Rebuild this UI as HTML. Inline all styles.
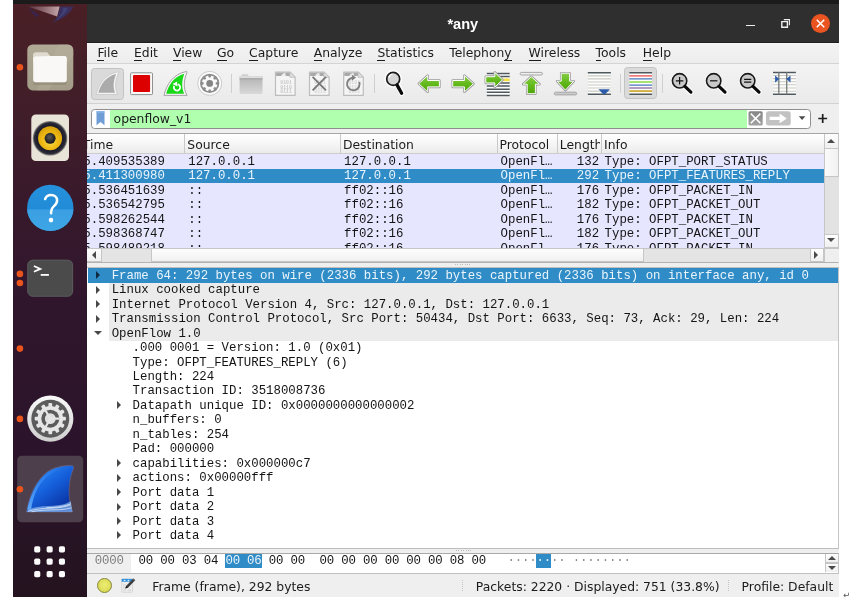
<!DOCTYPE html>
<html lang="en">
<head>
<meta charset="utf-8">
<title>*any</title>
<style>
html,body{margin:0;padding:0;background:#fff;}
body{width:865px;height:615px;overflow:hidden;position:relative;font-family:"DejaVu Sans","Liberation Sans",sans-serif;font-size:12.36px;color:#1b1b1b;}
div,span,svg{position:absolute;box-sizing:border-box;}
.mono{font-family:"Liberation Mono","DejaVu Sans Mono",monospace;font-size:12.375px;white-space:pre;line-height:14.45px;height:14.45px;color:#141414;}
.ui{white-space:pre;line-height:16px;height:16px;}
.sel{color:#eaf4fc;}
u{text-decoration:none;border-bottom:1.1px solid #1b1b1b;padding-bottom:0.2px;}
#dock{left:12.5px;top:4.2px;width:74.6px;height:593.1px;background:linear-gradient(180deg,#4a1f25 0%,#431f28 12%,#3a1a2b 30%,#30162d 50%,#2b142b 75%,#24131f 100%);}
.dot{width:6.6px;height:6.6px;border-radius:50%;background:#e8541c;left:16.1px;}
.tsep{width:1px;height:19.5px;top:73.6px;background:#cfcfcf;}
.pressed{background:#dadada;border:1px solid #c3c3c3;border-radius:3.5px;}
.hdr{top:134.3px;height:18.9px;line-height:23px;white-space:pre;color:#1b1b1b;}
.prow{left:87.1px;width:736.9px;height:14.45px;background:#e7e6ff;overflow:hidden;}
.prow.s{background:#308cc6;}
.prow span{top:0.5px;}
.drow{left:87.8px;width:750.4px;height:14.45px;}
.g{left:21.4px;right:0;top:0;height:14.45px;background:#ebebeb;}
.tri{width:0;height:0;border-style:solid;}
#root{left:0;top:0;width:865px;height:615px;will-change:transform;}
</style>
</head>
<body>
<div id="root">
<div id="topbar" style="left:12.5px;top:0;width:826.6px;height:4.3px;background:#1b1b1b"></div>
<div id="dock"></div>
<svg id="dockicons" style="left:12.5px;top:4.2px" width="74.6" height="592.3" viewBox="12.5 4.2 74.6 592.3">
<defs>
<linearGradient id="gFiles" x1="0" y1="0" x2="0" y2="1"><stop offset="0" stop-color="#b0a996"/><stop offset="1" stop-color="#a39c88"/></linearGradient>
<radialGradient id="gSpkY" cx=".5" cy=".62" r=".55"><stop offset="0" stop-color="#f8dc60"/><stop offset=".55" stop-color="#f0bc14"/><stop offset="1" stop-color="#dca60c"/></radialGradient>
<radialGradient id="gSpkD" cx=".45" cy=".4" r=".6"><stop offset="0" stop-color="#5a5a5a"/><stop offset="1" stop-color="#141414"/></radialGradient>
<radialGradient id="gSpkO" cx=".5" cy=".5" r=".5"><stop offset=".74" stop-color="#1c1c2c"/><stop offset=".9" stop-color="#2c2c38"/><stop offset="1" stop-color="#6a6864" stop-opacity=".55"/></radialGradient>
<linearGradient id="gHelpT" x1="0" y1="0" x2="0" y2="1"><stop offset="0" stop-color="#2591dc"/><stop offset="1" stop-color="#1f86d2"/></linearGradient>
<linearGradient id="gHelpB" x1="0" y1="0" x2="0" y2="1"><stop offset="0" stop-color="#3b9fe2"/><stop offset="1" stop-color="#3da6e6"/></linearGradient>
<linearGradient id="gSetR" x1="0" y1="0" x2="0" y2="1"><stop offset="0" stop-color="#fafafa"/><stop offset="1" stop-color="#cfcfcf"/></linearGradient>
<linearGradient id="gFin" x1=".15" y1=".1" x2=".8" y2=".95"><stop offset="0" stop-color="#2a86f4"/><stop offset=".45" stop-color="#1560dc"/><stop offset="1" stop-color="#0a2f9e"/></linearGradient>
<linearGradient id="gFinHi" x1="0" y1="1" x2="1" y2="0"><stop offset="0" stop-color="#6ab4ff" stop-opacity=".9"/><stop offset="1" stop-color="#2a86f4" stop-opacity="0"/></linearGradient>
<linearGradient id="gTb" x1="0" y1="0" x2="1" y2="0"><stop offset="0" stop-color="#5a3340"/><stop offset=".5" stop-color="#8c676e"/><stop offset="1" stop-color="#c2a6a8"/></linearGradient>
<clipPath id="cHelp"><circle cx="49.8" cy="208.1" r="23.2"/></clipPath>
</defs>
<!-- thunderbird remnant -->
<path d="M27.4 6.600L59.200 6.700L56.600 16.800Z" fill="url(#gTb)"/>
<path d="M27.200 6.800C30 11.500 33.500 15.500 37 18.600 36 16.500 37 15 39 15.800 34.500 13 30.500 9.800 27.200 6.800Z" fill="#33275e" opacity=".75"/>
<path d="M59.400 6.600L73 6.800C69.500 14.500 61 20.500 51.500 22.400 54.500 20.500 56 18.600 56.800 16.600 58 13 59 9 59.400 6.600Z" fill="#34377a" opacity=".65"/>
<path d="M62 8C63.500 11.500 60 16 55.500 19.500 61 17.500 66 13 67.500 8Z" fill="#465c9e" opacity=".4"/>
<!-- files -->
<rect x="26.8" y="44.6" width="46" height="46" rx="5.4" fill="url(#gFiles)"/>
<path d="M58 44.6h9.4a5.4 5.4 0 0 1 5.4 5.4v6L48 90.6H36z" fill="#b8b19e" opacity=".35"/>
<rect x="26.8" y="86.4" width="46" height="4.2" fill="#968f7c" opacity=".0"/>
<path d="M32.7 55.4a2.6 2.6 0 0 1 2.6-2.6h10.2c1.2 0 1.7.5 2.4 1.4l1.5 2h14.3a2.6 2.6 0 0 1 2.6 2.6V62H32.7z" fill="#dfdad0"/>
<rect x="32.7" y="56.2" width="33.6" height="26.2" rx="2.6" fill="#faf8f6" />
<path d="M32.7 56.6v-1.2a2.6 2.6 0 0 1 2.6-2.6h10.2c1.2 0 1.7.5 2.4 1.4l1.5 2z" fill="#dfdad0"/>
<path d="M32.7 80.4v2.2a2.6 2.6 0 0 0 2.6 2.6h28.4a2.6 2.6 0 0 0 2.6-2.6v-2.2a2.6 2.6 0 0 1-2.6 2.6H35.3a2.6 2.6 0 0 1-2.6-2.6z" fill="#8d8674" opacity=".6"/>
<!-- rhythmbox -->
<rect x="30.800" y="114.600" width="37.700" height="46.600" rx="4.600" fill="#e8e4d8"/>
<circle cx="49.6" cy="138.5" r="17.4" fill="url(#gSpkO)"/>
<circle cx="49.6" cy="138.5" r="12" fill="url(#gSpkY)"/>
<circle cx="49.6" cy="138.5" r="5.5" fill="url(#gSpkD)"/>
<!-- help -->
<circle cx="49.8" cy="208.1" r="23.2" fill="url(#gHelpT)"/>
<rect x="26" y="209.6" width="48" height="22" fill="url(#gHelpB)" clip-path="url(#cHelp)"/>
<path d="M44.6 199.2c1-2.6 3-4 5.8-4 3.6 0 6.2 2.2 6.2 5.4 0 2.6-1.4 4.2-3.4 6-1.8 1.600-2.600 3-2.600 5.400v1.400" fill="none" stroke="#fff" stroke-width="2.5" stroke-linecap="round"/>
<circle cx="50.5" cy="220.300" r="2.300" fill="#fff"/>
<!-- terminal -->
<rect x="26.800" y="259.900" width="45.800" height="37" rx="5.400" fill="#4b4b4b"/>
<rect x="27.300" y="260.400" width="44.800" height="36" rx="5" fill="none" stroke="#5c5c5c" stroke-width="1" opacity=".8"/>
<path d="M33.400 266.200l6.400 2.900-6.400 2.900" fill="none" stroke="#fff" stroke-width="1.800"/>
<rect x="40.200" y="274.200" width="8.200" height="1.800" fill="#fff"/>
<!-- settings -->
<circle cx="49.800" cy="418.900" r="23.100" fill="url(#gSetR)"/>
<circle cx="49.800" cy="418.900" r="19" fill="#5b5b5b"/>
<g fill="#e6e6e6">
<circle cx="49.800" cy="418.900" r="12.800"/>
<g><rect x="47.9" y="403.3" width="3.800" height="4.500" rx="1" transform="rotate(0.0 49.8 418.9)"/><rect x="47.9" y="403.3" width="3.800" height="4.500" rx="1" transform="rotate(30.0 49.8 418.9)"/><rect x="47.9" y="403.3" width="3.800" height="4.500" rx="1" transform="rotate(60.0 49.8 418.9)"/><rect x="47.9" y="403.3" width="3.800" height="4.500" rx="1" transform="rotate(90.0 49.8 418.9)"/><rect x="47.9" y="403.3" width="3.800" height="4.500" rx="1" transform="rotate(120.0 49.8 418.9)"/><rect x="47.9" y="403.3" width="3.800" height="4.500" rx="1" transform="rotate(150.0 49.8 418.9)"/><rect x="47.9" y="403.3" width="3.800" height="4.500" rx="1" transform="rotate(180.0 49.8 418.9)"/><rect x="47.9" y="403.3" width="3.800" height="4.500" rx="1" transform="rotate(210.0 49.8 418.9)"/><rect x="47.9" y="403.3" width="3.800" height="4.500" rx="1" transform="rotate(240.0 49.8 418.9)"/><rect x="47.9" y="403.3" width="3.800" height="4.500" rx="1" transform="rotate(270.0 49.8 418.9)"/><rect x="47.9" y="403.3" width="3.800" height="4.500" rx="1" transform="rotate(300.0 49.8 418.9)"/><rect x="47.9" y="403.3" width="3.800" height="4.500" rx="1" transform="rotate(330.0 49.8 418.9)"/></g>
</g>
<circle cx="49.800" cy="418.900" r="9" fill="#5b5b5b"/>
<circle cx="49.800" cy="418.900" r="5.400" fill="#e0e0e0"/>
<path d="M49.800 418.900L59 418.900M49.800 418.900L45.200 410.900M49.800 418.900L45.200 426.900" stroke="#e6e6e6" stroke-width="2.200"/>
<!-- wireshark highlighted -->
<rect x="16.700" y="456" width="66" height="66.500" rx="4.500" fill="#4d3f4b"/>
<path d="M25.900 512.300C28.500 497 35 481 47 472 54 467.300 63 465.700 70.500 465.800c2.300 0 3.300 1.200 2.500 3C69 478 66 495 72 512.300z" fill="url(#gFin)" stroke="#7a6272" stroke-width=".6"/>
<path d="M26.800 510C29.800 496 36 481.500 47.600 473 54 468.600 62 466.800 70 466.800 56 469 44 476 37.500 488 33.500 495.500 31.500 503 30.600 510z" fill="url(#gFinHi)"/>
<path d="M25.900 512.300c2-2.800 6-4.600 11-5.200 8-.9 15-.6 22-1.800 5-.9 9-2.400 11.400-4.200l1.700 11.200z" fill="#7eaeea" opacity=".75"/>
<path d="M27.500 511.500c7-2.200 15-3 24-3.200 7-.2 13-1.200 18.500-3M31 512c8-1.400 16-2 23-2 7 0 12-.6 17-2M46 508c8-.4 17-1 24.500-4" fill="none" stroke="#fff" stroke-width=".7" opacity=".85"/>
<!-- app grid -->
<g fill="#fbfbfb">
<rect x="33.7" y="546.5" width="6.100" height="6.100" rx="1.600"/><rect x="46.1" y="546.5" width="6.100" height="6.100" rx="1.600"/><rect x="58.4" y="546.5" width="6.100" height="6.100" rx="1.600"/>
<rect x="33.7" y="558.8" width="6.100" height="6.100" rx="1.600"/><rect x="46.1" y="558.8" width="6.100" height="6.100" rx="1.600"/><rect x="58.4" y="558.8" width="6.100" height="6.100" rx="1.600"/>
<rect x="33.7" y="571.3" width="6.100" height="6.100" rx="1.600"/><rect x="46.1" y="571.3" width="6.100" height="6.100" rx="1.600"/><rect x="58.4" y="571.3" width="6.100" height="6.100" rx="1.600"/>
</g>
<!-- running dots -->
<g fill="#e8541c">
<circle cx="19.400" cy="67.500" r="3.300"/><circle cx="19.400" cy="274.100" r="3.300"/><circle cx="19.400" cy="283.200" r="3.300"/><circle cx="19.400" cy="348.800" r="3.300"/><circle cx="19.400" cy="419.100" r="3.300"/><circle cx="19.400" cy="489.500" r="3.300"/>
</g>
</svg>

<div id="titlebar" style="left:87.1px;top:4.2px;width:752px;height:38.4px;background:#302f2f;border-bottom:1.4px solid #1f1f1f"></div>
<div class="ui" style="left:412.8px;top:14.1px;width:100px;text-align:center;color:#fff;font:bold 14.6px/20px 'Liberation Sans','DejaVu Sans',sans-serif;height:20px">*any</div>
<div style="left:746px;top:25px;width:9px;height:1.400px;background:#ececec"></div>
<svg style="left:779px;top:17px" width="13" height="13" viewBox="0 0 13 13"><path d="M2.800 4.600h5.600v5.600H2.800z" fill="none" stroke="#f0f0f0" stroke-width="1.400"/><path d="M4.800 2.600h5.600v5.600" fill="none" stroke="#f0f0f0" stroke-width="1.100"/><rect x="4.6" y="6" width="2" height="2.6" fill="#f2f2f2" opacity=".0"/></svg>
<div style="left:811.2px;top:13.4px;width:19px;height:19px;border-radius:50%;background:#e95420;margin-top:.5px"></div>
<svg style="left:811.2px;top:13.9px" width="19" height="19" viewBox="0 0 19 19"><path d="M5.800 5.800l7.400 7.400M13.200 5.800l-7.400 7.400" stroke="#fff" stroke-width="1.600" fill="none"/></svg>
<div id="win" style="left:87.1px;top:43px;width:752px;height:554.3px;background:#efefef"></div>
<div id="menubar" style="left:87.1px;top:43px;width:752px;height:20.600px;background:linear-gradient(#f3f3f3,#ededed);border-bottom:1px solid #d4d4d4;border-top:1px solid #f8f8f8"></div>
<div class="ui" style="left:97.4px;top:44.6px"><u>F</u>ile</div>
<div class="ui" style="left:134.0px;top:44.6px"><u>E</u>dit</div>
<div class="ui" style="left:173.0px;top:44.6px"><u>V</u>iew</div>
<div class="ui" style="left:217.0px;top:44.6px"><u>G</u>o</div>
<div class="ui" style="left:249.1px;top:44.6px"><u>C</u>apture</div>
<div class="ui" style="left:313.7px;top:44.6px"><u>A</u>nalyze</div>
<div class="ui" style="left:377.4px;top:44.6px"><u>S</u>tatistics</div>
<div class="ui" style="left:449.2px;top:44.6px">Telephon<u>y</u></div>
<div class="ui" style="left:528.6px;top:44.6px"><u>W</u>ireless</div>
<div class="ui" style="left:595.6px;top:44.6px"><u>T</u>ools</div>
<div class="ui" style="left:642.8px;top:44.6px"><u>H</u>elp</div>
<div id="toolbar" style="left:87.1px;top:63.6px;width:752px;height:40.4px;background:linear-gradient(#f3f3f3,#eaeaea);border-bottom:1px solid #d2d2d2"></div>
<div class="pressed" style="left:91.3px;top:67.5px;width:32.7px;height:32.2px"></div>
<div class="pressed" style="left:624.3px;top:67.4px;width:32.7px;height:32px"></div>
<div class="tsep" style="left:230.6px"></div><div class="tsep" style="left:374.3px"></div><div class="tsep" style="left:620.2px"></div><div class="tsep" style="left:662px"></div>
<svg id="toolicons" style="left:87.1px;top:62.7px" width="752" height="41" viewBox="87.1 62.6 752 41">
<defs>
<linearGradient id="gGrn" x1="0" y1="0" x2="0" y2="1"><stop offset="0" stop-color="#86ce46"/><stop offset=".5" stop-color="#64ba1c"/><stop offset="1" stop-color="#4ea40a"/></linearGradient>
<linearGradient id="gFold" x1="0" y1="0" x2="0" y2="1"><stop offset="0" stop-color="#b2b2b2"/><stop offset="1" stop-color="#d9d9d9"/></linearGradient>
<g id="filebase">
<path d="M.6.6h14.400l5.200 5.200v18.200H.6z" fill="#f5f5f5" stroke="#bdbdbd" stroke-width="1.200" stroke-linejoin="round"/>
<path d="M1.200 1.200h13.600l3.400 3.400H1.200z" fill="#a9a9a9"/>
<path d="M1.200 3.600h5.600c1-1.600 1.800-2.400 3.400-2.400h-9z" fill="#bcbcbc" opacity=".0"/>
<path d="M6.200 4.700c.8-1.900 2.200-3 4.200-3.300l.5 3.300z" fill="#ececec"/>
<path d="M15 .6v5.200h5.200z" fill="#e2e2e2" stroke="#bdbdbd" stroke-width=".9" stroke-linejoin="round"/>
</g>
<g id="mag">
<path d="M4.600 5.200L11.200 11.400" stroke="#fff" stroke-width="5.400" stroke-linecap="round" opacity=".9"/>
<circle cx="0" cy="0" r="8.600" fill="#fff" opacity=".9"/>
<circle cx="0" cy="0" r="7.200" fill="#c9c9c9" stroke="#1a1a1a" stroke-width="1.600"/>
<path d="M5.300 5.600L11.300 11.300" stroke="#0a0a0a" stroke-width="3.200" stroke-linecap="round"/>
</g>
</defs>
<!-- start capture (disabled) -->
<path d="M96.200 94.100C98.600 83.500 105.500 73.500 118.200 71.400c.5-.1.800.3.600.8C115.600 79.500 114.400 87 117.800 94.100z" fill="#f3f3f3" stroke="#c6c6c6" stroke-width=".8"/>
<path d="M98.400 92.400C100.600 84 106.400 75.600 116.200 73.500 113.600 80 112.800 86.500 115.200 92.400z" fill="#ababab"/>
<!-- stop -->
<rect x="130.700" y="72.400" width="21.900" height="21.800" rx=".8" fill="#fbfbfb" stroke="#8c9190" stroke-width="1"/>
<rect x="133.100" y="74.600" width="17.100" height="16.900" rx="1" fill="#dc0000"/>
<!-- restart -->
<path d="M164.100 95C166.600 84 173.500 73.400 186.500 71.100c.5-.1.800.3.600.8C184 79.500 183 87.500 187.100 95z" fill="#f8f4f8" stroke="#9c9a9c" stroke-width=".9"/>
<path d="M166.300 93.300C168.600 84.600 174.500 75.800 184.400 73.400 182 80 181.300 87 184.300 93.300z" fill="#18d818"/>
<path d="M174.300 85.400a3.200 3.200 0 1 0 3.600-1.500" fill="none" stroke="#fff" stroke-width="1.700"/>
<path d="M172.600 83.600l4.600-2.400.4 4.800z" fill="#fff"/>
<!-- options gear -->
<circle cx="209.800" cy="83" r="12" fill="#fdfdfd" stroke="#c4c4c4" stroke-width=".9"/>
<circle cx="209.800" cy="83" r="9.600" fill="#8d8d8d"/>
<g fill="#fafafa"><circle cx="209.800" cy="83" r="6"/>
<g><rect x="208.3" y="75.2" width="3" height="3" rx=".6" transform="rotate(22.5 209.8 83)"/><rect x="208.3" y="75.2" width="3" height="3" rx=".6" transform="rotate(67.5 209.8 83)"/><rect x="208.3" y="75.2" width="3" height="3" rx=".6" transform="rotate(112.5 209.8 83)"/><rect x="208.3" y="75.2" width="3" height="3" rx=".6" transform="rotate(157.5 209.8 83)"/><rect x="208.3" y="75.2" width="3" height="3" rx=".6" transform="rotate(202.5 209.8 83)"/><rect x="208.3" y="75.2" width="3" height="3" rx=".6" transform="rotate(247.5 209.8 83)"/><rect x="208.3" y="75.2" width="3" height="3" rx=".6" transform="rotate(292.5 209.8 83)"/><rect x="208.3" y="75.2" width="3" height="3" rx=".6" transform="rotate(337.5 209.8 83)"/></g></g>
<circle cx="209.800" cy="83" r="3.400" fill="#858585"/>
<!-- folder -->
<path d="M241.600 76v-1.200c0-.5.400-.9.900-.9h5c.5 0 .9.400.9.900V76z" fill="#d0d0d0"/>
<rect x="239.700" y="75.700" width="22.900" height="18" rx="1" fill="url(#gFold)"/>
<rect x="239.700" y="75.700" width="22.900" height="2.200" fill="#dedede"/>
<rect x="239.700" y="77.900" width="22.900" height="1.100" fill="#a4a4a4"/>
<!-- file icons -->
<use href="#filebase" x="275" y="71"/>
<g fill="#c8c8c8" font-family="Liberation Mono,monospace" font-size="4.800" font-weight="bold"><text x="280.400" y="83.500">0101</text><text x="280.400" y="88.300">0110</text><text x="280.400" y="93.100">0111</text></g>
<use href="#filebase" x="309" y="71"/>
<g fill="#d4d4d4" font-family="Liberation Mono,monospace" font-size="4.800" font-weight="bold"><text x="314.400" y="83.500">0101</text><text x="314.400" y="88.300">0110</text><text x="314.400" y="93.100">0111</text></g>
<path d="M312.700 76.500L326.100 89.900M326.100 76.500L312.700 89.900" stroke="#787878" stroke-width="1.900"/>
<use href="#filebase" x="343.200" y="71"/>
<g fill="#d4d4d4" font-family="Liberation Mono,monospace" font-size="4.800" font-weight="bold"><text x="348.600" y="83.500">0101</text><text x="348.600" y="88.300">0110</text><text x="348.600" y="93.100">0111</text></g>
<path d="M352.800 77.300a6.300 6.300 0 1 0 6.600 4.200" fill="none" stroke="#808080" stroke-width="1.900"/>
<path d="M352 74.300l4.200 2.900-4.200 3.100z" fill="#808080"/>
<!-- find -->
<g transform="translate(393.300 78.500)">
<path d="M4.600 5.200L8.600 14.600" stroke="#fff" stroke-width="5.400" stroke-linecap="round" opacity=".9"/>
<circle cx="0" cy="0" r="8.800" fill="#fff" opacity=".9"/>
<circle cx="0" cy="0" r="6.500" fill="#d6d6d6" stroke="#1a1a1a" stroke-width="1.700"/>
<path d="M-4.400 -1.400a4.600 4.600 0 0 1 3.800-3.500" fill="none" stroke="#fff" stroke-width="1.200"/>
<path d="M3.800 6L8.400 14.400" stroke="#0a0a0a" stroke-width="3.300" stroke-linecap="round"/>
</g>
<!-- back -->
<path d="M418.900 83.300L427.800 75.200V80.100H439.500V86.500H427.800V91.400Z" fill="none" stroke="#9c9a9c" stroke-width="2.500" stroke-linejoin="round"/><path d="M418.900 83.300L427.800 75.200V80.100H439.500V86.500H427.800V91.400Z" fill="url(#gGrn)" stroke="#fcfcfc" stroke-width="1" stroke-linejoin="round"/>
<!-- forward -->
<path d="M473.600 83.300L464.500 75.200V80.100H452.800V86.500H464.500V91.400Z" fill="none" stroke="#9c9a9c" stroke-width="2.500" stroke-linejoin="round"/><path d="M473.600 83.300L464.500 75.200V80.100H452.800V86.500H464.500V91.400Z" fill="url(#gGrn)" stroke="#fcfcfc" stroke-width="1" stroke-linejoin="round"/>
<!-- goto -->
<rect x="486.900" y="72" width="22.900" height="24" fill="#fdfdfd"/>
<g stroke="#4f595d" stroke-width="1.500"><path d="M486.900 73h22.900M486.900 76.200h22.900M486.900 82.500h22.900M486.900 85.700h22.900M486.900 88.800h22.900M486.900 91.900h22.900M486.900 95.100h22.900"/></g>
<rect x="500" y="78.100" width="9.800" height="2.700" fill="#f6e046"/>
<path d="M502.600 79.400L494.900 72V76.300H485.900V82.500H494.900V86.800Z" fill="none" stroke="#9c9a9c" stroke-width="2.500" stroke-linejoin="round"/><path d="M502.600 79.400L494.900 72V76.300H485.900V82.500H494.900V86.800Z" fill="url(#gGrn)" stroke="#fcfcfc" stroke-width="1" stroke-linejoin="round"/>
<!-- first -->
<rect x="520.200" y="72" width="22.400" height="2.600" rx="1.300" fill="#eeeeee" stroke="#9e9e9e" stroke-width=".9"/>
<path d="M531.400 76.200L539.600 83.800H535.500V93.300H527.300V83.800H523.200Z" fill="none" stroke="#9c9a9c" stroke-width="2.500" stroke-linejoin="round"/><path d="M531.400 76.200L539.600 83.800H535.500V93.300H527.300V83.800H523.200Z" fill="url(#gGrn)" stroke="#fcfcfc" stroke-width="1" stroke-linejoin="round"/>
<!-- last -->
<rect x="554.400" y="91.800" width="22.400" height="2.700" rx="1.350" fill="#cccccc" stroke="#9e9e9e" stroke-width=".9"/>
<path d="M565.500 89.700L557.200 80.800H561.300V72.800H569.700V80.800H573.800Z" fill="none" stroke="#9c9a9c" stroke-width="2.500" stroke-linejoin="round"/><path d="M565.500 89.700L557.200 80.800H561.300V72.800H569.700V80.800H573.800Z" fill="url(#gGrn)" stroke="#fcfcfc" stroke-width="1" stroke-linejoin="round"/>
<!-- autoscroll -->
<rect x="587.900" y="71.500" width="23.100" height="23.200" fill="#fdfdfd"/>
<g stroke="#c9c9c1" stroke-width="1.100"><path d="M587.900 75.500h23.100M587.900 78.500h23.100M587.900 81.600h23.100M587.900 84.600h23.100M587.900 87.600h23.100M587.900 90.700h23.100"/></g>
<g stroke="#4f595d" stroke-width="1.500"><path d="M587.900 72.250h23.100M587.900 93.900h23.100"/></g>
<path d="M598.600 88.800h11.400l-4 4.400c-.9 1-2.500 1-3.400 0z" fill="#2c5caa"/>
<!-- colorize -->
<rect x="629.400" y="71.500" width="22.800" height="23.200" fill="#fdfdfd"/>
<g stroke-width="1.250"><path d="M629.400 72.250h22.800M629.400 93.900h22.800" stroke="#4f595d" stroke-width="1.500"/><path d="M629.400 75.500h22.800" stroke="#ee4646"/><path d="M629.400 78.500h22.800M629.400 84.600h22.800" stroke="#4676bc"/><path d="M629.400 81.600h22.800" stroke="#76d41e"/><path d="M629.400 87.600h22.800" stroke="#86629a"/><path d="M629.400 90.700h22.800" stroke="#d2ae3e" stroke-width="1.900"/></g>
<!-- zoom in/out/reset -->
<g transform="translate(679.700 80.400)"><use href="#mag"/><path d="M-3.700 0h7.400M0 -3.700v7.400" stroke="#111" stroke-width="1.200"/></g>
<g transform="translate(713.800 80.400)"><use href="#mag"/><path d="M-3.700 0h7.400" stroke="#111" stroke-width="1.200"/></g>
<g transform="translate(747.800 80.400)"><use href="#mag"/><path d="M-3.600 -1.400h7.200M-3.600 1.400h7.200" stroke="#111" stroke-width="1.300"/></g>
<!-- resize columns -->
<rect x="773.100" y="71.500" width="22.900" height="23" fill="#fdfdfd"/>
<g stroke="#c9c9c1" stroke-width="1.100"><path d="M773.100 75.100h22.900M773.100 78.200h22.900M773.100 81.300h22.900M773.100 84.400h22.900M773.100 87.600h22.900M773.100 90.800h22.900"/></g>
<g stroke="#4f595d" stroke-width="1.500"><path d="M773.100 72.200h22.900M773.100 93.800h22.900"/></g>
<path d="M778.900 72.200v21.600M786.800 72.200v21.600" stroke="#7c8482" stroke-width="1.400"/>
<path d="M775.200 75.200v6.800l4.200-3.400zM790.600 75.200v6.800l-4.200-3.400z" fill="#2c5caa"/>
</svg>

<div id="filter" style="left:91.3px;top:109.2px;width:720px;height:19.6px;background:#fff;border:1px solid #8f8f8f;border-radius:3.5px;overflow:hidden"><div style="left:18px;top:0;width:637px;height:18px;background:#afffaf"></div></div>
<svg style="left:95.6px;top:111.2px" width="10" height="15" viewBox="0 0 10 15"><path d="M0.5 0.3h8v13.9l-4-3.2-4 3.2z" fill="#6f9ed6"/><path d="M0.5 0.3h8v1.6H0.5z" fill="#8ab2e2"/></svg>
<div class="ui" style="left:113.6px;top:111.2px">openflow_v1</div>
<svg id="filterbtns" style="left:745px;top:108px" width="90" height="22" viewBox="745 108 90 22">
<defs><linearGradient id="gX" x1="0" y1="0" x2="0" y2="1"><stop offset="0" stop-color="#858585"/><stop offset="1" stop-color="#a3a3a3"/></linearGradient></defs>
<rect x="748.500" y="111.300" width="14.200" height="14.200" rx="1.500" fill="url(#gX)"/>
<path d="M750.800 113.600l9.600 9.600M760.400 113.600l-9.600 9.600" stroke="#fff" stroke-width="1.500"/>
<rect x="766" y="111.300" width="24.700" height="14.200" rx="2.500" fill="#c2c2c2"/>
<path d="M769.600 116.800h10v-3.200l7.200 4.800-7.200 4.800v-3.200h-10z" fill="#fff"/>
<path d="M798.800 116.300h6.600l-3.300 3.800z" fill="#4c4c4c"/>
<path d="M818.300 118.500h8.800M822.700 114.100v8.800" stroke="#1e1e1e" stroke-width="1.700"/>
</svg>

<div id="plist" style="left:87.1px;top:132.9px;width:752px;height:130.2px;background:#fff;border-top:1.400px solid #a6a6a6;border-bottom:1.100px solid #b2b2b2;border-right:1px solid #c4c4c4"></div>
<div style="left:87.1px;top:134.3px;width:737px;height:19.5px;background:linear-gradient(#ffffff,#f6f6f6 50%,#ebebeb);border-bottom:1px solid #cdcdcd"></div>
<div id="phead" style="left:87.1px;top:134.3px;width:736.9px;height:19px;overflow:hidden"><div class="hdr" style="top:0;left:-4.3px;width:100.8px;overflow:hidden">Time</div><div class="hdr" style="top:0;left:100.2px;width:151.7px;overflow:hidden">Source</div><div class="hdr" style="top:0;left:255.9px;width:152.0px;overflow:hidden">Destination</div><div class="hdr" style="top:0;left:412.4px;width:55.5px;overflow:hidden">Protocol</div><div class="hdr" style="top:0;left:472.7px;width:39.9px;overflow:hidden">Length</div><div class="hdr" style="top:0;left:517.0px;width:219.9px;overflow:hidden">Info</div><div style="top:0;left:97.4px;width:1px;height:19px;background:#c9c9c9"></div><div style="top:0;left:253.1px;width:1px;height:19px;background:#c9c9c9"></div><div style="top:0;left:409.9px;width:1px;height:19px;background:#c9c9c9"></div><div style="top:0;left:469.5px;width:1px;height:19px;background:#c9c9c9"></div><div style="top:0;left:513.6px;width:1px;height:19px;background:#c9c9c9"></div></div>
<div id="prows" style="left:87.1px;top:154.4px;width:736.9px;height:93.2px;overflow:hidden;background:#e7e6ff">
<div class="prow" style="left:0;top:0.00px"><span class="mono" style="left:-3.8px">5.409535389</span><span class="mono" style="left:101.2px">127.0.0.1</span><span class="mono" style="left:257.0px">127.0.0.1</span><span class="mono" style="left:413.5px">OpenFl…</span><span class="mono" style="left:470.2px;width:41.8px;text-align:right">132</span><span class="mono" style="left:517.5px">Type: OFPT_PORT_STATUS</span></div>
<div class="prow s" style="left:0;top:14.45px"><span class="mono sel" style="left:-3.8px">5.411300980</span><span class="mono sel" style="left:101.2px">127.0.0.1</span><span class="mono sel" style="left:257.0px">127.0.0.1</span><span class="mono sel" style="left:413.5px">OpenFl…</span><span class="mono sel" style="left:470.2px;width:41.8px;text-align:right">292</span><span class="mono sel" style="left:517.5px">Type: OFPT_FEATURES_REPLY</span></div>
<div class="prow" style="left:0;top:28.90px"><span class="mono" style="left:-3.8px">5.536451639</span><span class="mono" style="left:101.2px">::</span><span class="mono" style="left:257.0px">ff02::16</span><span class="mono" style="left:413.5px">OpenFl…</span><span class="mono" style="left:470.2px;width:41.8px;text-align:right">176</span><span class="mono" style="left:517.5px">Type: OFPT_PACKET_IN</span></div>
<div class="prow" style="left:0;top:43.35px"><span class="mono" style="left:-3.8px">5.536542795</span><span class="mono" style="left:101.2px">::</span><span class="mono" style="left:257.0px">ff02::16</span><span class="mono" style="left:413.5px">OpenFl…</span><span class="mono" style="left:470.2px;width:41.8px;text-align:right">182</span><span class="mono" style="left:517.5px">Type: OFPT_PACKET_OUT</span></div>
<div class="prow" style="left:0;top:57.80px"><span class="mono" style="left:-3.8px">5.598262544</span><span class="mono" style="left:101.2px">::</span><span class="mono" style="left:257.0px">ff02::16</span><span class="mono" style="left:413.5px">OpenFl…</span><span class="mono" style="left:470.2px;width:41.8px;text-align:right">176</span><span class="mono" style="left:517.5px">Type: OFPT_PACKET_IN</span></div>
<div class="prow" style="left:0;top:72.25px"><span class="mono" style="left:-3.8px">5.598368747</span><span class="mono" style="left:101.2px">::</span><span class="mono" style="left:257.0px">ff02::16</span><span class="mono" style="left:413.5px">OpenFl…</span><span class="mono" style="left:470.2px;width:41.8px;text-align:right">182</span><span class="mono" style="left:517.5px">Type: OFPT_PACKET_OUT</span></div>
<div class="prow" style="left:0;top:86.70px"><span class="mono" style="left:-3.8px">5.598489218</span><span class="mono" style="left:101.2px">::</span><span class="mono" style="left:257.0px">ff02::16</span><span class="mono" style="left:413.5px">OpenFl…</span><span class="mono" style="left:470.2px;width:41.8px;text-align:right">176</span><span class="mono" style="left:517.5px">Type: OFPT_PACKET_IN</span></div>
</div>
<div style="left:824px;top:134.3px;width:14.6px;height:113.3px;background:#e2e2e2;border-left:1px solid #c6c6c6"></div>
<div style="left:824px;top:134.3px;width:14.6px;height:14.8px;background:linear-gradient(#fdfdfd,#f0f0f0);border:1px solid #c6c6c6;border-top:none"></div>
<div class="tri" style="left:827.2px;top:139px;border-width:0 4.1px 4.4px 4.1px;border-color:transparent transparent #4a4a4a transparent"></div>
<div style="left:824px;top:149.1px;width:14.6px;height:28.4px;background:linear-gradient(90deg,#fbfbfb,#f1f1f1);border:1px solid #c6c6c6;border-top:none"></div>
<div style="left:824px;top:233.8px;width:14.6px;height:13.8px;background:linear-gradient(#fdfdfd,#f0f0f0);border:1px solid #c6c6c6"></div>
<div class="tri" style="left:827.2px;top:238.4px;border-width:4.4px 4.1px 0 4.1px;border-color:#4a4a4a transparent transparent transparent"></div>
<div style="left:87.1px;top:247.6px;width:736.9px;height:14.5px;background:#e4e4e4;border-top:1px solid #c6c6c6"></div>
<div style="left:87.1px;top:247.6px;width:15px;height:14.5px;background:linear-gradient(#fdfdfd,#f0f0f0);border:1px solid #c6c6c6;border-left:none"></div>
<div class="tri" style="left:92px;top:251.2px;border-width:4.1px 4.6px 4.1px 0;border-color:transparent #4a4a4a transparent transparent"></div>
<div style="left:151.3px;top:247.6px;width:492.4px;height:14.5px;background:linear-gradient(#fdfdfd,#f1f1f1);border:1px solid #c6c6c6"></div>
<div style="left:809.6px;top:247.6px;width:14.4px;height:14.5px;background:linear-gradient(#fdfdfd,#f0f0f0);border:1px solid #c6c6c6"></div>
<div class="tri" style="left:814.4px;top:251.2px;border-width:4.1px 0 4.1px 4.6px;border-color:transparent transparent transparent #4a4a4a"></div>
<div style="left:824px;top:247.6px;width:14.6px;height:14.5px;background:#efefef;border-left:1px solid #c6c6c6;border-top:1px solid #c6c6c6"></div>
<div style="left:455px;top:264.4px;width:16px;height:1px;background:repeating-linear-gradient(90deg,#b9b9b9 0 1px,transparent 1px 2.4px)"></div>
<div id="details" style="left:87.1px;top:267.4px;width:752px;height:281.2px;background:#fff;border-top:1px solid #c2beba;border-bottom:1px solid #bdbdbd;border-right:1px solid #c4c4c4"></div>
<div class="drow" style="top:268.30px;background:#308cc6;"><div class="tri" style="left:8.6px;top:3.1px;border-width:4.3px 0 4.3px 4.3px;border-color:transparent transparent transparent #0e2a40"></div><span class="mono sel" style="left:23.9px;top:0.6px">Frame 64: 292 bytes on wire (2336 bits), 292 bytes captured (2336 bits) on interface any, id 0</span></div>
<div class="drow" style="top:282.75px;"><div class="g"></div><div class="tri" style="left:8.6px;top:3.1px;border-width:4.3px 0 4.3px 4.3px;border-color:transparent transparent transparent #484848"></div><span class="mono" style="left:23.9px;top:0.6px">Linux cooked capture</span></div>
<div class="drow" style="top:297.20px;"><div class="g"></div><div class="tri" style="left:8.6px;top:3.1px;border-width:4.3px 0 4.3px 4.3px;border-color:transparent transparent transparent #484848"></div><span class="mono" style="left:23.9px;top:0.6px">Internet Protocol Version 4, Src: 127.0.0.1, Dst: 127.0.0.1</span></div>
<div class="drow" style="top:311.65px;"><div class="g"></div><div class="tri" style="left:8.6px;top:3.1px;border-width:4.3px 0 4.3px 4.3px;border-color:transparent transparent transparent #484848"></div><span class="mono" style="left:23.9px;top:0.6px">Transmission Control Protocol, Src Port: 50434, Dst Port: 6633, Seq: 73, Ack: 29, Len: 224</span></div>
<div class="drow" style="top:326.10px;"><div class="g"></div><div class="tri" style="left:6.5px;top:5.2px;border-width:4.6px 4.2px 0 4.2px;border-color:#484848 transparent transparent transparent"></div><span class="mono" style="left:23.9px;top:0.6px">OpenFlow 1.0</span></div>
<div class="drow" style="top:340.55px;"><span class="mono" style="left:44.8px;top:0.6px">.000 0001 = Version: 1.0 (0x01)</span></div>
<div class="drow" style="top:355.00px;"><span class="mono" style="left:44.8px;top:0.6px">Type: OFPT_FEATURES_REPLY (6)</span></div>
<div class="drow" style="top:369.45px;"><span class="mono" style="left:44.8px;top:0.6px">Length: 224</span></div>
<div class="drow" style="top:383.90px;"><span class="mono" style="left:44.8px;top:0.6px">Transaction ID: 3518008736</span></div>
<div class="drow" style="top:398.35px;"><div class="tri" style="left:28.8px;top:3.1px;border-width:4.3px 0 4.3px 4.3px;border-color:transparent transparent transparent #484848"></div><span class="mono" style="left:44.8px;top:0.6px">Datapath unique ID: 0x0000000000000002</span></div>
<div class="drow" style="top:412.80px;"><span class="mono" style="left:44.8px;top:0.6px">n_buffers: 0</span></div>
<div class="drow" style="top:427.25px;"><span class="mono" style="left:44.8px;top:0.6px">n_tables: 254</span></div>
<div class="drow" style="top:441.70px;"><span class="mono" style="left:44.8px;top:0.6px">Pad: 000000</span></div>
<div class="drow" style="top:456.15px;"><div class="tri" style="left:28.8px;top:3.1px;border-width:4.3px 0 4.3px 4.3px;border-color:transparent transparent transparent #484848"></div><span class="mono" style="left:44.8px;top:0.6px">capabilities: 0x000000c7</span></div>
<div class="drow" style="top:470.60px;"><div class="tri" style="left:28.8px;top:3.1px;border-width:4.3px 0 4.3px 4.3px;border-color:transparent transparent transparent #484848"></div><span class="mono" style="left:44.8px;top:0.6px">actions: 0x00000fff</span></div>
<div class="drow" style="top:485.05px;"><div class="tri" style="left:28.8px;top:3.1px;border-width:4.3px 0 4.3px 4.3px;border-color:transparent transparent transparent #484848"></div><span class="mono" style="left:44.8px;top:0.6px">Port data 1</span></div>
<div class="drow" style="top:499.50px;"><div class="tri" style="left:28.8px;top:3.1px;border-width:4.3px 0 4.3px 4.3px;border-color:transparent transparent transparent #484848"></div><span class="mono" style="left:44.8px;top:0.6px">Port data 2</span></div>
<div class="drow" style="top:513.95px;"><div class="tri" style="left:28.8px;top:3.1px;border-width:4.3px 0 4.3px 4.3px;border-color:transparent transparent transparent #484848"></div><span class="mono" style="left:44.8px;top:0.6px">Port data 3</span></div>
<div class="drow" style="top:528.40px;"><div class="tri" style="left:28.8px;top:3.1px;border-width:4.3px 0 4.3px 4.3px;border-color:transparent transparent transparent #484848"></div><span class="mono" style="left:44.8px;top:0.6px">Port data 4</span></div>
<div style="left:456px;top:549.8px;width:16px;height:1px;background:repeating-linear-gradient(90deg,#b9b9b9 0 1px,transparent 1px 2.4px)"></div>
<div id="hex" style="left:87.1px;top:552.9px;width:752px;height:21.600px;background:#fff;border-top:1px solid #a9a9a9;border-bottom:1.400px solid #c0c0c0;border-right:1px solid #c4c4c4"></div>
<div style="left:87.1px;top:553.9px;width:44.2px;height:19px;background:#efefef"></div>
<span class="mono" style="left:94.8px;top:554px;color:#7e7e7e;letter-spacing:-0.176px;">0000</span>
<div style="left:225.4px;top:553.9px;width:36.4px;height:14.2px;background:#308cc6"></div>
<span class="mono" style="left:138.5px;top:554px;letter-spacing:-0.176px;">00 00 03 04 </span>
<span class="mono sel" style="left:225.4px;top:554px;letter-spacing:-0.176px;">00 06</span>
<span class="mono" style="left:268.8px;top:554px;letter-spacing:-0.176px;">00 00  00 00 00 00 00 00 08 00</span>
<div style="left:536.3px;top:553.9px;width:14.5px;height:14.2px;background:#308cc6"></div>
<span class="mono" style="left:507.6px;top:554px;color:#8a8a8a;letter-spacing:-0.176px;">····</span>
<span class="mono sel" style="left:536.6px;top:554px;letter-spacing:-0.176px;">··</span>
<span class="mono" style="left:551.0px;top:554px;color:#8a8a8a;letter-spacing:-0.176px;">·· ········</span>
<div style="left:824.6px;top:553.9px;width:14px;height:9.2px;background:linear-gradient(#fdfdfd,#f0f0f0);border:1px solid #c6c6c6;border-top:none"></div>
<div class="tri" style="left:827.6px;top:556px;border-width:0 4px 4.2px 4px;border-color:transparent transparent #4a4a4a transparent"></div>
<div style="left:824.6px;top:563.1px;width:14px;height:9.2px;background:linear-gradient(#fdfdfd,#f0f0f0);border:1px solid #c6c6c6;border-bottom:none"></div>
<div class="tri" style="left:827.6px;top:566px;border-width:4.2px 4px 0 4px;border-color:#4a4a4a transparent transparent transparent"></div>
<div style="left:97.1px;top:577.7px;width:15.200px;height:15.200px;border-radius:50%;background:radial-gradient(circle at 50% 45%,#ecec74,#dcdc56 70%,#d2d24c);border:1.300px solid #84843a"></div>
<svg id="editicon" style="left:120px;top:577px" width="17" height="17" viewBox="120 577 17 17">
<rect x="121.700" y="578.900" width="10.900" height="13.400" rx=".8" fill="#ececec" stroke="#cfcfcf" stroke-width=".7"/>
<rect x="121.700" y="578.900" width="10.900" height="2.800" fill="#2a8fde"/>
<path d="M123.400 580.900l1.200-1.300 1.200 1.300zM127.200 580.900l1.200-1.300 1.200 1.300z" fill="#eaf4ff"/>
<path d="M123.200 585h3M123.200 587.600h2M127.800 590.200h3.600M123.200 590.200h2.600" stroke="#cdcdcd" stroke-width=".8"/>
<path d="M125.300 588.500l1-2.800 7-7.200 1.900 1.800-7 7.200z" fill="#3c3c3c"/>
<path d="M125.300 588.500l.9-2.600 1.800 1.700z" fill="#1a1a1a"/>
<path d="M132.500 579.300l.9-.9 1.900 1.800-.9.900z" fill="#6a6a6a"/>
</svg>

<div class="ui" style="left:152.2px;top:579.1px">Frame (frame), 292 bytes</div>
<div style="left:462.3px;top:580px;width:1px;height:12px;background:repeating-linear-gradient(#c4c4c4 0 1px,transparent 1px 2px)"></div>
<div class="ui" style="left:475.8px;top:579.1px">Packets: 2220 · Displayed: 751 (33.8%)</div>
<div style="left:728.3px;top:580px;width:1px;height:12px;background:repeating-linear-gradient(#c4c4c4 0 1px,transparent 1px 2px)"></div>
<div class="ui" style="left:741.6px;top:579.1px">Profile: Default</div>
<div class="ui" style="left:843px;top:586.6px;font-size:8.5px;color:#555;font-family:'DejaVu Sans',sans-serif">↵</div>
</div>
</body>
</html>
